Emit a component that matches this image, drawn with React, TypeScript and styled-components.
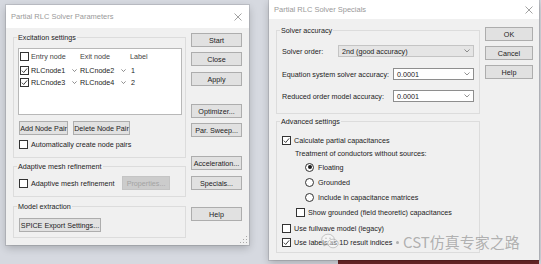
import React from 'react';
import styled, { createGlobalStyle } from 'styled-components';

const GlobalStyle = createGlobalStyle`
  html, body { margin: 0; padding: 0; }
  body {
    background: #d6d9e0;
    font-family: "Liberation Sans", Arial, sans-serif;
    font-size: 7.2px;
    color: #1c1c1c;
  }
  * { box-sizing: border-box; }
`;

const Desktop = styled.div`
  position: relative;
  width: 541px;
  height: 264px;
  overflow: hidden;
  display: flex;
  align-items: flex-start;
  gap: 20px;
  padding-left: 6px;
`;

const Window = styled.div<{ $width: number; $height: number; $top?: number }>`
  position: relative;
  flex-shrink: 0;
  width: ${p => p.$width}px;
  height: ${p => p.$height}px;
  margin-top: ${p => p.$top ?? 0}px;
  background: #f0f0f0;
  display: flex;
  flex-direction: column;
  box-shadow: 0 0 0 1px rgba(0, 0, 0, 0.1), 0 3px 8px rgba(0, 0, 0, 0.22);
`;

const TitleBar = styled.div<{ $height: number; $pr: number }>`
  height: ${p => p.$height}px;
  flex-shrink: 0;
  background: #fff;
  display: flex;
  align-items: center;
  justify-content: space-between;
  padding: 0 ${p => p.$pr}px 0 5px;
`;

const Title = styled.span`
  color: #9a9a9a;
  font-size: 7.5px;
`;

const Body = styled.div<{ $pt: number }>`
  flex: 1;
  display: flex;
  gap: 5px;
  padding: ${p => p.$pt}px 7px 0 7px;
`;

const GroupColumn = styled.div<{ $w: number }>`
  width: ${p => p.$w}px;
  flex-shrink: 0;
  display: flex;
  flex-direction: column;
`;

const ButtonColumn = styled.div<{ $pt: number }>`
  display: flex;
  flex-direction: column;
  padding-top: ${p => p.$pt}px;
`;

const Group = styled.fieldset<{ $pad: string; $mt?: number }>`
  margin: ${p => p.$mt ?? 0}px 0 0 0;
  padding: ${p => p.$pad};
  border: 1px solid #dcdcdc;
  min-width: 0;
  display: flex;
  flex-direction: column;
`;

const Legend = styled.legend`
  padding: 0 1px;
  margin-left: -2px;
  line-height: 9px;
  font-size: 7.2px;
`;

const PushButton = styled.button<{ $w?: number; $mt?: number }>`
  width: ${p => (p.$w ? `${p.$w}px` : '100%')};
  height: 14px;
  margin-top: ${p => p.$mt ?? 0}px;
  flex-shrink: 0;
  padding: 0;
  font: inherit;
  color: #1c1c1c;
  background: #e1e1e1;
  border: 1px solid #adadad;
  display: flex;
  align-items: center;
  justify-content: center;
  white-space: nowrap;

  &:disabled {
    background: #cccccc;
    border-color: #c4c4c4;
    color: #a3a3a3;
  }
`;

const NodeTable = styled.div`
  margin-left: -1px;
  height: 67px;
  background: #fff;
  border: 1px solid #b8b8b8;
  display: flex;
  flex-direction: column;
`;

const TableRow = styled.div<{ $header?: boolean }>`
  display: grid;
  grid-template-columns: 60px 50px 1fr;
  align-items: center;
  height: ${p => (p.$header ? 15 : 12)}px;
  padding-left: 1px;
`;

const Cell = styled.div<{ $chevronGap?: number; $pl?: number }>`
  display: flex;
  align-items: center;
  gap: 2px;
  padding-left: ${p => p.$pl ?? 0}px;
  padding-right: ${p => p.$chevronGap ?? 0}px;
  white-space: nowrap;

  & > svg {
    margin-left: auto;
  }
`;

const HeaderText = styled.span`
  color: #444;
`;

const Row = styled.div<{ $mt?: number; $h?: number }>`
  display: flex;
  align-items: center;
  gap: 5px;
  height: ${p => p.$h ?? 14}px;
  margin-top: ${p => p.$mt ?? 0}px;
`;

const OptionRow = styled.label<{ $mt?: number; $indent?: number; $gap?: number }>`
  display: flex;
  align-items: center;
  gap: ${p => p.$gap ?? 3}px;
  height: 10px;
  margin-top: ${p => p.$mt ?? 0}px;
  padding-left: ${p => p.$indent ?? 0}px;
  white-space: nowrap;
`;

const Box = styled.span`
  width: 9px;
  height: 9px;
  flex-shrink: 0;
  border: 1px solid #333;
  background: #fff;
  display: inline-flex;
  align-items: center;
  justify-content: center;
`;

const RadioRing = styled.span`
  width: 9px;
  height: 9px;
  flex-shrink: 0;
  border: 1px solid #333;
  border-radius: 50%;
  background: #fff;
  display: inline-flex;
  align-items: center;
  justify-content: center;
`;

const RadioDot = styled.span`
  width: 4px;
  height: 4px;
  border-radius: 50%;
  background: #1c1c1c;
`;

const FieldRow = styled.div<{ $mt?: number }>`
  display: flex;
  align-items: center;
  height: 12px;
  margin-top: ${p => p.$mt ?? 0}px;
  white-space: nowrap;
`;

const Combo = styled.div<{ $w: number; $muted?: boolean }>`
  width: ${p => p.$w}px;
  height: 12px;
  margin-left: auto;
  display: flex;
  align-items: center;
  justify-content: space-between;
  padding: 0 3px;
  background: ${p => (p.$muted ? '#e5e5e5' : '#fff')};
  border: 1px solid ${p => (p.$muted ? '#c4c4c4' : '#8e8e8e')};
`;

const ResizeGrip = styled.span`
  position: absolute;
  right: 2px;
  bottom: 2px;
  width: 8px;
  height: 8px;
  background: radial-gradient(circle, #a8a8a8 0.7px, transparent 0.9px) 0 0 / 3px 3px;
  clip-path: polygon(100% 0, 100% 100%, 0 100%);
`;

const RightStack = styled.div`
  display: flex;
  flex-direction: column;
  flex-shrink: 0;
`;

const BehindStrip = styled.div`
  height: 4px;
  background: linear-gradient(to right, transparent 0 69px, #6d2828 69px);
`;

const Watermark = styled.div`
  position: absolute;
  left: 321px;
  top: 233px;
  display: flex;
  align-items: center;
  gap: 4px;
  font-family: "Noto Sans CJK SC", "Noto Sans", sans-serif;
  font-size: 15px;
  line-height: 15px;
  color: rgba(135, 135, 135, 0.62);
  pointer-events: none;
`;

const WatermarkDot = styled.span`
  width: 3px;
  height: 3px;
  margin-left: 53px;
  margin-top: 1px;
  border-radius: 50%;
  background: rgba(135, 135, 135, 0.62);
`;

const CloseIcon = () => (
  <svg width="8" height="8" viewBox="0 0 8 8">
    <path d="M0.5 0.5 L7.5 7.5 M7.5 0.5 L0.5 7.5" stroke="#8a8a8a" strokeWidth="0.8" fill="none" />
  </svg>
);

const Chevron = ({ w = 5, color = '#555' }: { w?: number; color?: string }) => (
  <svg width={w} height={w * 0.6} viewBox="0 0 10 6">
    <polyline points="0.8,0.8 5,5 9.2,0.8" stroke={color} strokeWidth="1.2" fill="none" />
  </svg>
);

const Check = ({ checked }: { checked?: boolean }) => (
  <Box>
    {checked && (
      <svg width="7" height="7" viewBox="0 0 8 8">
        <polyline points="1,4.2 3.1,6.3 7,1.6" stroke="#222" strokeWidth="1" fill="none" />
      </svg>
    )}
  </Box>
);

const Radio = ({ selected }: { selected?: boolean }) => (
  <RadioRing>{selected && <RadioDot />}</RadioRing>
);

const WeChatMark = () => (
  <svg width="18" height="17" viewBox="0 0 18 17">
    <ellipse cx="7" cy="6.5" rx="6.3" ry="5.3" fill="rgba(255,255,255,0.35)" stroke="rgba(150,150,150,0.5)" strokeWidth="1" />
    <path d="M3.5 10.8 L2.8 13 L5.6 11.6" fill="none" stroke="rgba(150,150,150,0.5)" strokeWidth="1" />
    <ellipse cx="12" cy="10.5" rx="5.2" ry="4.3" fill="rgba(255,255,255,0.35)" stroke="rgba(150,150,150,0.5)" strokeWidth="1" />
    <circle cx="5" cy="5.2" r="0.8" fill="rgba(150,150,150,0.55)" />
    <circle cx="9" cy="5.2" r="0.8" fill="rgba(150,150,150,0.55)" />
    <circle cx="10.4" cy="9.8" r="0.7" fill="rgba(150,150,150,0.55)" />
    <circle cx="13.6" cy="9.8" r="0.7" fill="rgba(150,150,150,0.55)" />
  </svg>
);

const nodePairs = [
  { entry: 'RLCnode1', exit: 'RLCnode2', label: '1' },
  { entry: 'RLCnode3', exit: 'RLCnode4', label: '2' },
];

const ParametersDialog = () => (
  <Window $width={243} $height={240} $top={5}>
    <TitleBar $height={23} $pr={7}>
      <Title>Partial RLC Solver Parameters</Title>
      <CloseIcon />
    </TitleBar>
    <Body $pt={4.5}>
      <GroupColumn $w={173}>
        <Group $pad="6.5px 3px 8px 5px">
          <Legend>Excitation settings</Legend>
          <NodeTable>
            <TableRow $header>
              <Cell>
                <Check />
                <HeaderText>Entry node</HeaderText>
              </Cell>
              <Cell>
                <HeaderText>Exit node</HeaderText>
              </Cell>
              <Cell>
                <HeaderText>Label</HeaderText>
              </Cell>
            </TableRow>
            {nodePairs.map(pair => (
              <TableRow key={pair.label}>
                <Cell $chevronGap={3}>
                  <Check checked />
                  <span>{pair.entry}</span>
                  <Chevron color="#444" />
                </Cell>
                <Cell $chevronGap={4}>
                  <span>{pair.exit}</span>
                  <Chevron color="#444" />
                </Cell>
                <Cell $pl={1}>{pair.label}</Cell>
              </TableRow>
            ))}
          </NodeTable>
          <Row $mt={6}>
            <PushButton $w={49}>Add Node Pair</PushButton>
            <PushButton $w={57}>Delete Node Pair</PushButton>
          </Row>
          <OptionRow $mt={4}>
            <Check />
            Automatically create node pairs
          </OptionRow>
        </Group>

        <Group $pad="5.5px 3px 6px 5px" $mt={3.5}>
          <Legend>Adaptive mesh refinement</Legend>
          <Row>
            <OptionRow>
              <Check />
              Adaptive mesh refinement
            </OptionRow>
            <PushButton $w={48} disabled style={{ marginLeft: 'auto', marginRight: 12 }}>
              Properties...
            </PushButton>
          </Row>
        </Group>

        <Group $pad="7px 3px 5px 5px" $mt={5}>
          <Legend>Model extraction</Legend>
          <Row>
            <PushButton $w={82}>SPICE Export Settings...</PushButton>
          </Row>
        </Group>
      </GroupColumn>

      <ButtonColumn $pt={0.5}>
        <PushButton $w={51}>Start</PushButton>
        <PushButton $w={51} $mt={5}>Close</PushButton>
        <PushButton $w={51} $mt={6}>Apply</PushButton>
        <PushButton $w={51} $mt={18}>Optimizer...</PushButton>
        <PushButton $w={51} $mt={5}>Par. Sweep...</PushButton>
        <PushButton $w={51} $mt={19}>Acceleration...</PushButton>
        <PushButton $w={51} $mt={6}>Specials...</PushButton>
        <PushButton $w={51} $mt={17}>Help</PushButton>
      </ButtonColumn>
    </Body>
    <ResizeGrip />
  </Window>
);

const SpecialsDialog = () => (
  <RightStack>
    <Window $width={270} $height={260}>
      <TitleBar $height={19} $pr={6}>
        <Title>Partial RLC Solver Specials</Title>
        <CloseIcon />
      </TitleBar>
      <Body $pt={6.5}>
        <GroupColumn $w={204}>
          <Group $pad="10.5px 5px 11px 5px">
            <Legend>Solver accuracy</Legend>
            <FieldRow>
              Solver order:
              <Combo $w={136} $muted>
                <span>2nd (good accuracy)</span>
                <Chevron w={6} color="#666" />
              </Combo>
            </FieldRow>
            <FieldRow $mt={11}>
              Equation system solver accuracy:
              <Combo $w={81}>
                <span>0.0001</span>
                <Chevron w={6} color="#666" />
              </Combo>
            </FieldRow>
            <FieldRow $mt={10}>
              Reduced order model accuracy:
              <Combo $w={81}>
                <span>0.0001</span>
                <Chevron w={6} color="#666" />
              </Combo>
            </FieldRow>
          </Group>

          <Group $pad="9.5px 5px 5px 5px" $mt={2.5}>
            <Legend>Advanced settings</Legend>
            <OptionRow>
              <Check checked />
              Calculate partial capacitances
            </OptionRow>
            <OptionRow $mt={3.5} $indent={13}>
              Treatment of conductors without sources:
            </OptionRow>
            <OptionRow $mt={3.5} $indent={23} $gap={4}>
              <Radio selected />
              Floating
            </OptionRow>
            <OptionRow $mt={5} $indent={23} $gap={4}>
              <Radio />
              Grounded
            </OptionRow>
            <OptionRow $mt={5} $indent={23} $gap={4}>
              <Radio />
              Include in capacitance matrices
            </OptionRow>
            <OptionRow $mt={5} $indent={14}>
              <Check />
              Show grounded (field theoretic) capacitances
            </OptionRow>
            <OptionRow $mt={6}>
              <Check />
              Use fullwave model (legacy)
            </OptionRow>
            <OptionRow $mt={4}>
              <Check checked />
              Use labels as 1D result indices
            </OptionRow>
          </Group>
        </GroupColumn>

        <ButtonColumn $pt={1.5}>
          <PushButton $w={48}>OK</PushButton>
          <PushButton $w={48} $mt={5}>Cancel</PushButton>
          <PushButton $w={48} $mt={5}>Help</PushButton>
        </ButtonColumn>
      </Body>
    </Window>
    <BehindStrip />
  </RightStack>
);

export default function App() {
  return (
    <>
      <GlobalStyle />
      <Desktop>
        <ParametersDialog />
        <SpecialsDialog />
        <Watermark>
          <WeChatMark />
          <WatermarkDot />
          <span>CST仿真专家之路</span>
        </Watermark>
      </Desktop>
    </>
  );
}
